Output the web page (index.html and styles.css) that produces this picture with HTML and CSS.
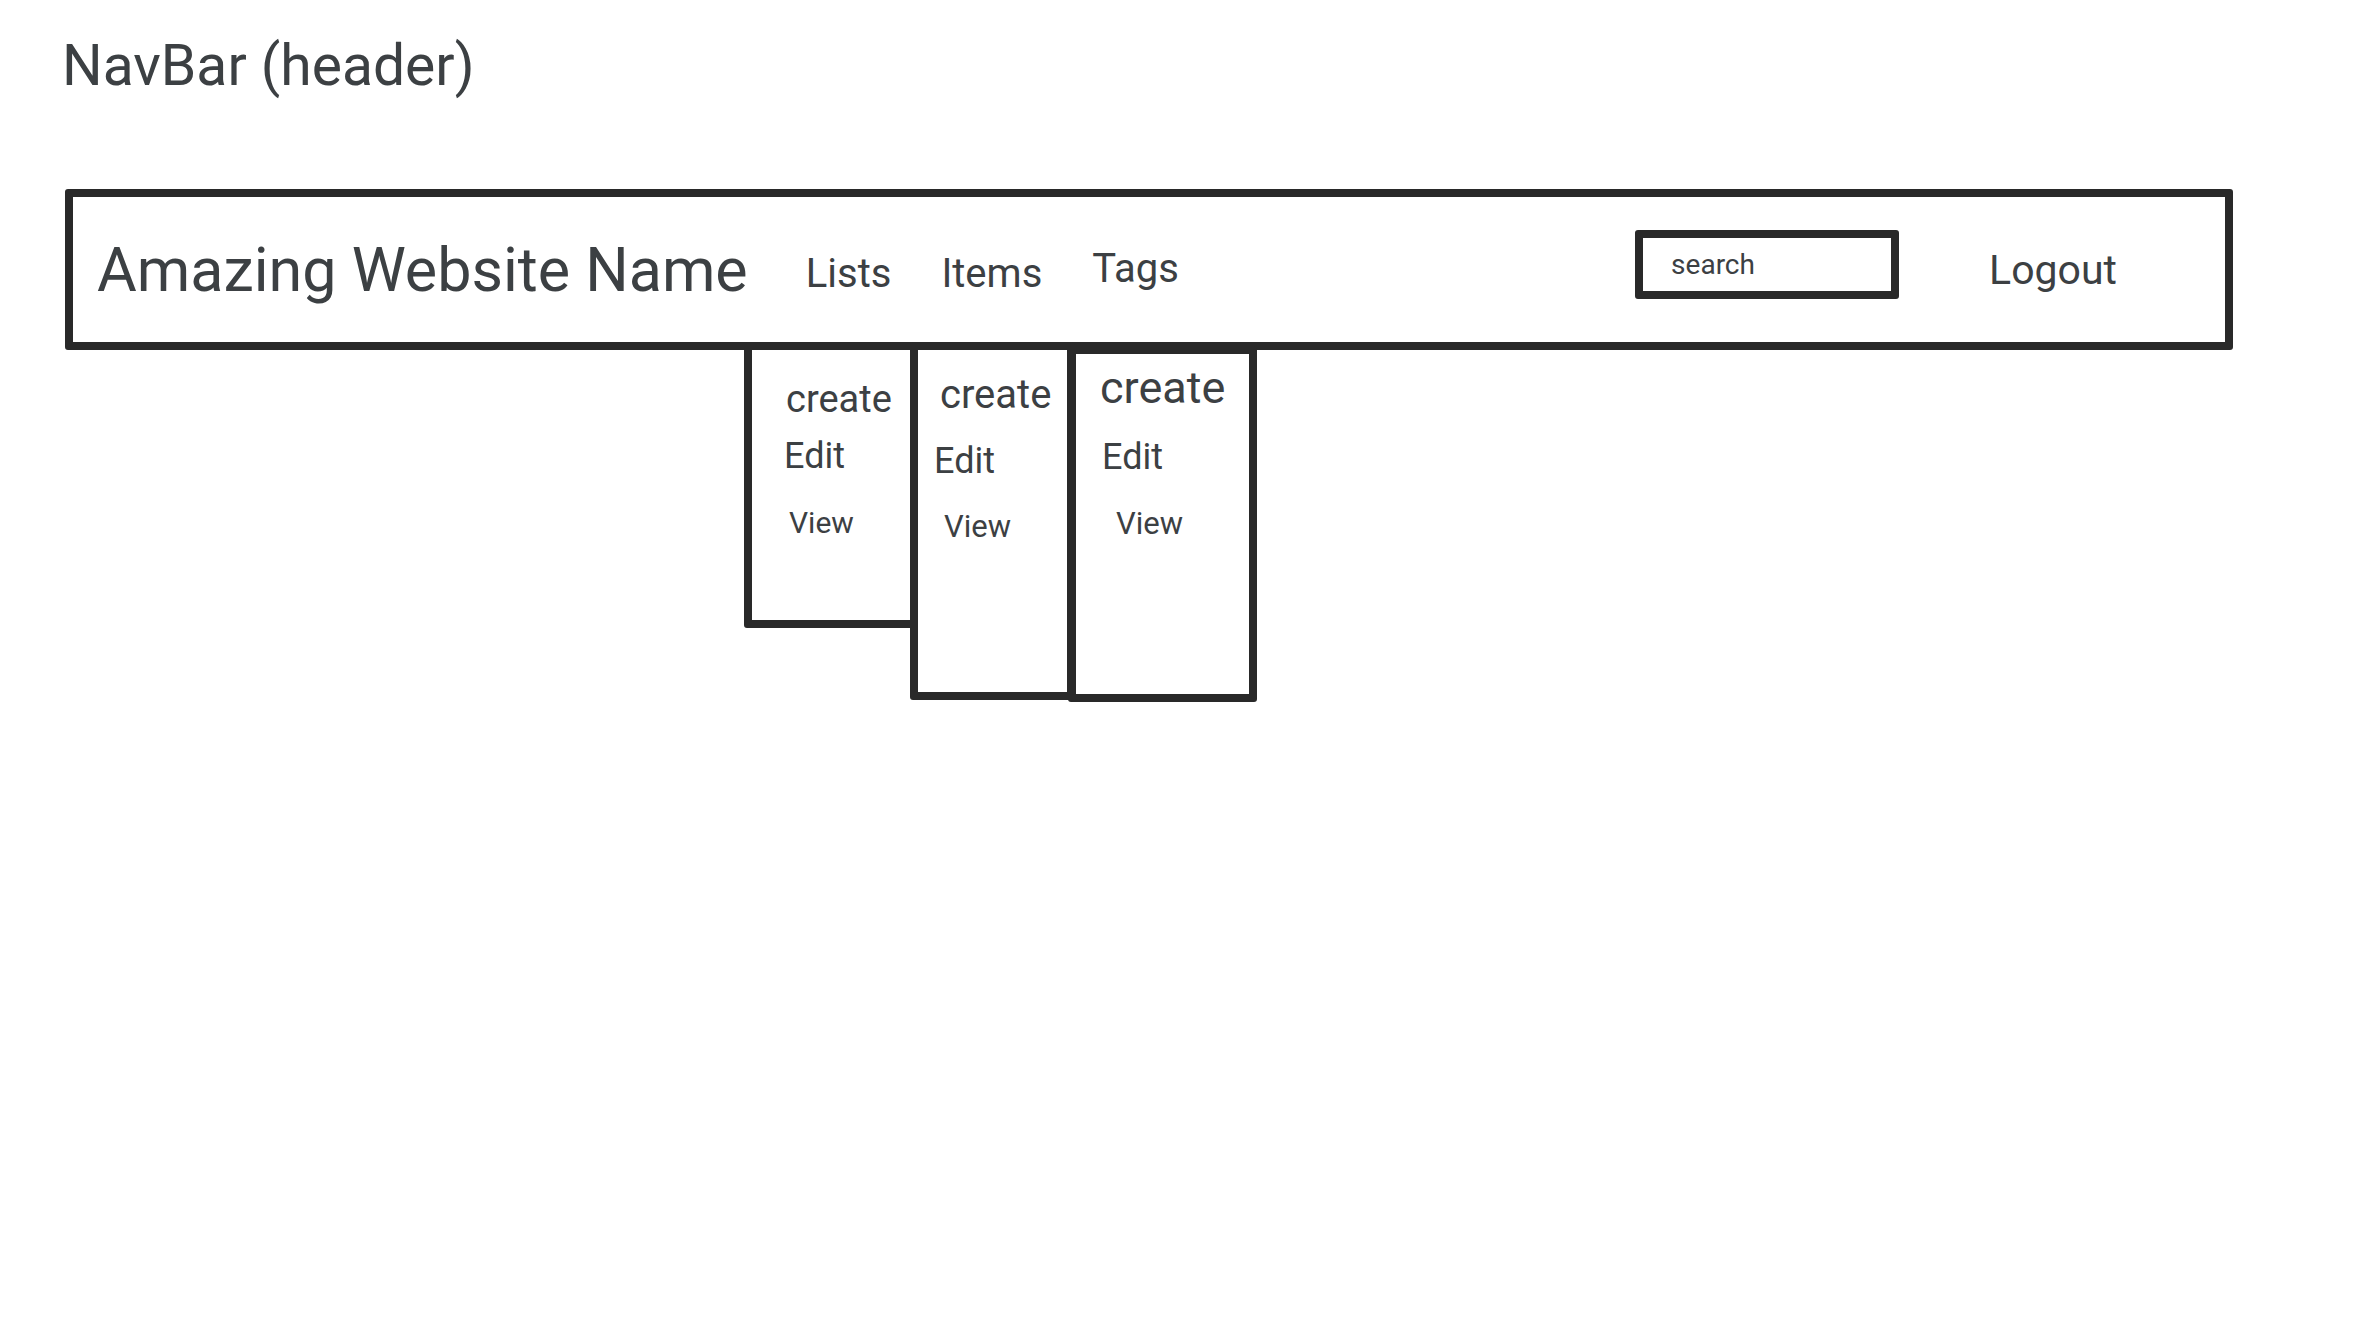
FILE: index.html
```html
<!DOCTYPE html>
<html lang="en">
<head>
  <meta charset="UTF-8" />
  <meta name="viewport" content="width=device-width, initial-scale=1.0"/>
  <title>NavBar (header)</title>
  <link rel="stylesheet" href="styles.css">
</head>
<body>
  <h1 class="page-title">NavBar (header)</h1>

  <header class="navbar">
    <div class="brand">Amazing Website Name</div>
    <nav class="nav-links">
      <a href="#" class="nav-link">Lists</a>
      <a href="#" class="nav-link">Items</a>
      <a href="#" class="nav-link nav-link--tags">Tags</a>
    </nav>
    <div class="search-box"><span>search</span></div>
    <a href="#" class="logout">Logout</a>
  </header>

  <div class="dropdowns">
    <ul class="dropdown dropdown--lists">
      <li class="menu-create">create</li>
      <li class="menu-edit">Edit</li>
      <li class="menu-view">View</li>
    </ul>
    <ul class="dropdown dropdown--items">
      <li class="menu-create">create</li>
      <li class="menu-edit">Edit</li>
      <li class="menu-view">View</li>
    </ul>
    <ul class="dropdown dropdown--tags">
      <li class="menu-create">create</li>
      <li class="menu-edit">Edit</li>
      <li class="menu-view">View</li>
    </ul>
  </div>
</body>
</html>
```

FILE: styles.css
```css
body {
  margin: 0;
  font-family: Roboto, "Noto Sans", sans-serif;
  color: #3c4043;
  background: #ffffff;
}

a {
  color: inherit;
  text-decoration: none;
}

.page-title {
  font-size: 57px;
  font-weight: 400;
  line-height: normal;
  margin: 32px 0 0 62px;
}

.navbar {
  box-sizing: border-box;
  width: 2168px;
  height: 161px;
  margin: 90px 0 0 65px;
  padding: 0 108px 0 24px;
  border: 8px solid #292929;
  border-radius: 3px;
  display: flex;
  align-items: center;
}

.brand {
  font-size: 61px;
  margin-right: 58px;
}

.nav-links {
  display: flex;
  align-items: flex-start;
  gap: 50px;
  font-size: 40px;
  margin-top: 7px;
}

.nav-link--tags {
  margin-top: -5px;
}

.search-box {
  box-sizing: border-box;
  width: 264px;
  height: 69px;
  margin-left: auto;
  align-self: flex-start;
  margin-top: 33px;
  padding-left: 28px;
  border: 8px solid #292929;
  border-radius: 3px;
  display: flex;
  align-items: center;
  font-size: 28px;
}

.logout {
  font-size: 41px;
  margin-left: 90px;
}

/* dropdown menus hanging under the nav links */
.dropdowns {
  display: flex;
  align-items: flex-start;
  margin: -8px 0 0 744px;
}

.dropdown {
  box-sizing: border-box;
  list-style: none;
  margin: 0;
  padding: 0;
  border: 8px solid #292929;
  border-radius: 3px;
  background: #ffffff;
}

.dropdown li {
  line-height: normal;
}

.dropdown--lists {
  width: 174px;
  height: 286px;
}

.dropdown--items {
  width: 165px;
  height: 358px;
  margin-left: -8px;
}

.dropdown--tags {
  width: 189px;
  height: 356px;
  margin-left: -7px;
  margin-top: 4px;
}

.dropdown--lists .menu-create { font-size: 38px; margin: 27px 0 0 34px; }
.dropdown--lists .menu-edit { font-size: 36px; margin: 14px 0 0 32px; }
.dropdown--lists .menu-view { font-size: 30px; margin: 28px 0 0 37px; }

.dropdown--items .menu-create { font-size: 40px; margin: 21px 0 0 22px; }
.dropdown--items .menu-edit { font-size: 36px; margin: 22px 0 0 16px; }
.dropdown--items .menu-view { font-size: 31px; margin: 26px 0 0 26px; }

.dropdown--tags .menu-create { font-size: 45px; margin: 7px 0 0 24px; }
.dropdown--tags .menu-edit { font-size: 36px; margin: 22px 0 0 26px; }
.dropdown--tags .menu-view { font-size: 31px; margin: 27px 0 0 40px; }
```
